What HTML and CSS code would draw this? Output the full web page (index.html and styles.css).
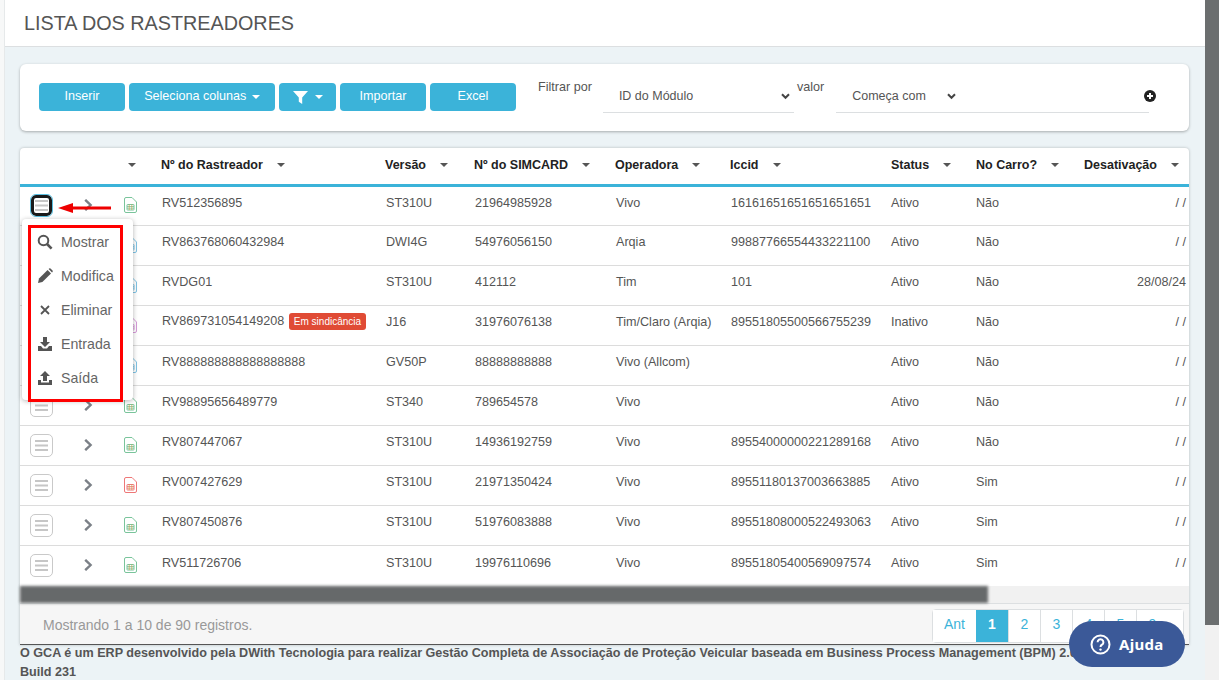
FILE: index.html
```html
<!DOCTYPE html>
<html lang="pt-BR">
<head>
    <meta charset="UTF-8">
    <meta name="viewport" content="width=device-width, initial-scale=1.0">
    <title>Lista dos Rastreadores</title>
    <link rel="stylesheet" href="styles.css">
</head>
<body>
    <svg class="defs" width="0" height="0">
        <symbol id="ico-sim" viewBox="0 0 13 16">
            <path d="M2 .5h6l4.5 4.5v9a1.5 1.5 0 0 1-1.5 1.5H2A1.5 1.5 0 0 1 .5 14V2A1.5 1.5 0 0 1 2 .5z" fill="none" stroke="currentColor" stroke-width="1"/>
            <rect x="3" y="7.5" width="7" height="5.5" rx=".5" fill="none" stroke="currentColor" stroke-width="1"/>
            <path d="M3 9.5h7M3 11.2h7" stroke="currentColor" stroke-width=".8"/>
            <path d="M5.2 7.5V13M7.8 7.5V13" stroke="#c9a24a" stroke-width=".7"/>
        </symbol>
        <symbol id="ico-lines" viewBox="0 0 13 11">
            <path d="M0 1h13M0 5.5h13M0 10h13" stroke="#c6c6c6" stroke-width="2"/>
        </symbol>
        <symbol id="ico-chevron" viewBox="0 0 9 12">
            <path d="M1.2 .8L6.6 6 1.2 11.2" fill="none" stroke="#7b8087" stroke-width="2.4"/>
        </symbol>
    </svg>

    <div class="page">
        <div class="sliver"></div>
        <div class="main">
            <div class="title-bar"><h1>LISTA DOS RASTREADORES</h1></div>

            <div class="filter-card">
                <div class="btn-group">
                    <button class="btn btn-insert">Inserir</button>
                    <button class="btn btn-cols">Seleciona colunas <span class="caret"></span></button>
                    <button class="btn btn-funnel">
                        <svg width="15" height="13" viewBox="0 0 15 13"><path d="M0 0h15L9.2 6.6V13L5.8 10.8V6.6z" fill="#fff"/></svg>
                        <span class="caret"></span>
                    </button>
                    <button class="btn btn-insert">Importar</button>
                    <button class="btn btn-insert">Excel</button>
                </div>
                <span class="filter-label label-por">Filtrar por</span>
                <div class="select-box select-field">
                    <span>ID do Módulo</span>
                    <svg class="select-arrow" width="9" height="7" viewBox="0 0 9 7"><path d="M1 1.2l3.5 3.6L8 1.2" fill="none" stroke="#444" stroke-width="2"/></svg>
                </div>
                <span class="filter-label label-valor">valor</span>
                <div class="select-box select-value">
                    <span>Começa com</span>
                    <svg class="select-arrow-near" width="9" height="7" viewBox="0 0 9 7"><path d="M1 1.2l3.5 3.6L8 1.2" fill="none" stroke="#444" stroke-width="2"/></svg>
                    <svg class="plus" width="12" height="12" viewBox="0 0 12 12"><circle cx="6" cy="6" r="6" fill="#222"/><path d="M6 3v6M3 6h6" stroke="#fff" stroke-width="2"/></svg>
                </div>
            </div>

            <div class="table-card">
                <table class="grid">
                    <colgroup>
                        <col class="c-menu"><col class="c-exp"><col class="c-ico"><col class="c-num">
                        <col class="c-ver"><col class="c-sim"><col class="c-op"><col class="c-iccid">
                        <col class="c-status"><col class="c-car"><col class="c-off">
                    </colgroup>
                    <thead>
                        <tr>
                            <th></th><th></th>
                            <th class="th-ico"><span class="caret dark"></span></th>
                            <th>Nº do Rastreador<span class="caret dark"></span></th>
                            <th>Versão<span class="caret dark"></span></th>
                            <th>Nº do SIMCARD<span class="caret dark"></span></th>
                            <th>Operadora<span class="caret dark"></span></th>
                            <th>Iccid<span class="caret dark"></span></th>
                            <th>Status<span class="caret dark"></span></th>
                            <th>No Carro?<span class="caret dark"></span></th>
                            <th>Desativação<span class="caret dark"></span></th>
                        </tr>
                    </thead>
                    <tbody>
                        <tr>
                            <td><span class="row-btn active"><svg width="13" height="11"><use href="#ico-lines"/></svg></span></td>
                            <td class="td-exp"><svg width="9" height="12"><use href="#ico-chevron"/></svg></td>
                            <td class="td-ico green"><svg width="13" height="16"><use href="#ico-sim"/></svg></td>
                            <td>RV512356895</td><td>ST310U</td><td>21964985928</td><td>Vivo</td><td>16161651651651651651</td><td>Ativo</td><td>Não</td><td class="right">/ /</td>
                        </tr>
                        <tr>
                            <td></td>
                            <td class="td-exp"><svg width="9" height="12"><use href="#ico-chevron"/></svg></td>
                            <td class="td-ico blue"><svg width="13" height="16"><use href="#ico-sim"/></svg></td>
                            <td>RV863768060432984</td><td>DWI4G</td><td>54976056150</td><td>Arqia</td><td>99887766554433221100</td><td>Ativo</td><td>Não</td><td class="right">/ /</td>
                        </tr>
                        <tr>
                            <td></td>
                            <td class="td-exp"><svg width="9" height="12"><use href="#ico-chevron"/></svg></td>
                            <td class="td-ico blue"><svg width="13" height="16"><use href="#ico-sim"/></svg></td>
                            <td>RVDG01</td><td>ST310U</td><td>412112</td><td>Tim</td><td>101</td><td>Ativo</td><td>Não</td><td class="right">28/08/24</td>
                        </tr>
                        <tr>
                            <td></td>
                            <td class="td-exp"><svg width="9" height="12"><use href="#ico-chevron"/></svg></td>
                            <td class="td-ico violet"><svg width="13" height="16"><use href="#ico-sim"/></svg></td>
                            <td>RV869731054149208 <span class="badge">Em sindicância</span></td><td>J16</td><td>31976076138</td><td>Tim/Claro (Arqia)</td><td>89551805500566755239</td><td>Inativo</td><td>Não</td><td class="right">/ /</td>
                        </tr>
                        <tr>
                            <td></td>
                            <td class="td-exp"><svg width="9" height="12"><use href="#ico-chevron"/></svg></td>
                            <td class="td-ico blue"><svg width="13" height="16"><use href="#ico-sim"/></svg></td>
                            <td>RV888888888888888888</td><td>GV50P</td><td>88888888888</td><td>Vivo (Allcom)</td><td></td><td>Ativo</td><td>Não</td><td class="right">/ /</td>
                        </tr>
                        <tr>
                            <td><span class="row-btn"><svg width="13" height="11"><use href="#ico-lines"/></svg></span></td>
                            <td class="td-exp"><svg width="9" height="12"><use href="#ico-chevron"/></svg></td>
                            <td class="td-ico green"><svg width="13" height="16"><use href="#ico-sim"/></svg></td>
                            <td>RV98895656489779</td><td>ST340</td><td>789654578</td><td>Vivo</td><td></td><td>Ativo</td><td>Não</td><td class="right">/ /</td>
                        </tr>
                        <tr>
                            <td><span class="row-btn"><svg width="13" height="11"><use href="#ico-lines"/></svg></span></td>
                            <td class="td-exp"><svg width="9" height="12"><use href="#ico-chevron"/></svg></td>
                            <td class="td-ico green"><svg width="13" height="16"><use href="#ico-sim"/></svg></td>
                            <td>RV807447067</td><td>ST310U</td><td>14936192759</td><td>Vivo</td><td>89554000000221289168</td><td>Ativo</td><td>Não</td><td class="right">/ /</td>
                        </tr>
                        <tr>
                            <td><span class="row-btn"><svg width="13" height="11"><use href="#ico-lines"/></svg></span></td>
                            <td class="td-exp"><svg width="9" height="12"><use href="#ico-chevron"/></svg></td>
                            <td class="td-ico red"><svg width="13" height="16"><use href="#ico-sim"/></svg></td>
                            <td>RV007427629</td><td>ST310U</td><td>21971350424</td><td>Vivo</td><td>89551180137003663885</td><td>Ativo</td><td>Sim</td><td class="right">/ /</td>
                        </tr>
                        <tr>
                            <td><span class="row-btn"><svg width="13" height="11"><use href="#ico-lines"/></svg></span></td>
                            <td class="td-exp"><svg width="9" height="12"><use href="#ico-chevron"/></svg></td>
                            <td class="td-ico green"><svg width="13" height="16"><use href="#ico-sim"/></svg></td>
                            <td>RV807450876</td><td>ST310U</td><td>51976083888</td><td>Vivo</td><td>89551808000522493063</td><td>Ativo</td><td>Sim</td><td class="right">/ /</td>
                        </tr>
                        <tr>
                            <td><span class="row-btn"><svg width="13" height="11"><use href="#ico-lines"/></svg></span></td>
                            <td class="td-exp"><svg width="9" height="12"><use href="#ico-chevron"/></svg></td>
                            <td class="td-ico green"><svg width="13" height="16"><use href="#ico-sim"/></svg></td>
                            <td>RV511726706</td><td>ST310U</td><td>19976110696</td><td>Vivo</td><td>89551805400569097574</td><td>Ativo</td><td>Sim</td><td class="right">/ /</td>
                        </tr>
                    </tbody>
                </table>

                <div class="h-scroll"><div class="h-thumb"></div></div>

                <div class="table-foot">
                    <span class="foot-info">Mostrando 1 a 10 de 90 registros.</span>
                    <div class="pager">
                        <a>Ant</a><a class="current">1</a><a>2</a><a>3</a><a>4</a><a>5</a><a>9</a>
                    </div>
                </div>

                <!-- row menu open over the table -->
                <div class="row-menu">
                    <div class="menu-item">
                        <svg width="16" height="16" viewBox="0 0 16 16"><circle cx="6.5" cy="6.5" r="4.8" fill="none" stroke="#555" stroke-width="2"/><path d="M10 10l4.6 4.6" stroke="#555" stroke-width="2.6"/></svg>
                        Mostrar
                    </div>
                    <div class="menu-item">
                        <svg width="16" height="16" viewBox="0 0 16 16"><path d="M1 15l1-4.4L10.6 2l3.4 3.4L5.4 14z" fill="#555"/><path d="M11.6 1l.6-.4a1 1 0 0 1 1.3 0l2 2a1 1 0 0 1 0 1.3l-.5.6z" fill="#555"/></svg>
                        Modifica
                    </div>
                    <div class="menu-item">
                        <svg width="16" height="16" viewBox="0 0 16 16"><path d="M4 4l8 8M12 4l-8 8" stroke="#555" stroke-width="1.8"/></svg>
                        Eliminar
                    </div>
                    <div class="menu-item">
                        <svg width="16" height="16" viewBox="0 0 16 16"><path d="M6 1h4v5h3L8 11 3 6h3z" fill="#555"/><path d="M1 10h3l2 2.5h4l2-2.5h3v5H1z" fill="#555"/></svg>
                        Entrada
                    </div>
                    <div class="menu-item">
                        <svg width="16" height="16" viewBox="0 0 16 16"><path d="M8 1l5 5h-3v5H6V6H3z" fill="#555"/><path d="M1 10h3v2.5h8V10h3v5H1z" fill="#555"/></svg>
                        Saída
                    </div>
                    <div class="menu-mark"></div>
                </div>

                <svg class="red-arrow" width="53" height="10" viewBox="0 0 53 10"><path d="M0 5l15-5v3.5h38v3H15V10z" fill="#ee0000"/></svg>
            </div>

            <p class="about">O GCA é um ERP desenvolvido pela DWith Tecnologia para realizar Gestão Completa de Associação de Proteção Veicular baseada em Business Process Management (BPM) 2.0<br>Build 231</p>
        </div>
        <div class="page-scroll"><div class="page-thumb"></div></div>
    </div>

    <button class="help">
        <svg width="21" height="21" viewBox="0 0 21 21"><circle cx="10.5" cy="10.5" r="9" fill="none" stroke="#fff" stroke-width="2"/><path d="M7.6 8.2a2.9 2.9 0 1 1 4.4 2.5c-1 .6-1.5 1-1.5 2.2" fill="none" stroke="#fff" stroke-width="2"/><circle cx="10.5" cy="15.6" r="1.2" fill="#fff"/></svg>
        Ajuda
    </button>
</body>
</html>
```

FILE: styles.css
```css
* {
    box-sizing: border-box;
}

html, body {
    margin: 0;
    height: 680px;
    overflow: hidden;
}

body {
    font-family: "Liberation Sans", Arial, sans-serif;
    font-size: 14px;
    color: #555;
    background: #ecf3f6;
}

.defs {
    position: absolute;
}

.page {
    display: flex;
    height: 680px;
}

.sliver {
    width: 5px;
    background: #f7f8f8;
    border-right: 1px solid #e6e9ea;
}

.main {
    width: 1200px;
}

.page-scroll {
    width: 14px;
    background: #f1f1f1;
}

.page-thumb {
    height: 625px;
    background: #6b6e6f;
}

/* title */
.title-bar {
    height: 47px;
    padding-left: 19px;
    background: #fff;
    border-bottom: 1px solid #dcdfe1;
}

.title-bar h1 {
    margin: 0;
    font-size: 19.8px;
    font-weight: 400;
    line-height: 46px;
    color: #555;
}

/* filter */
.filter-card {
    display: flex;
    align-items: flex-start;
    height: 67px;
    margin: 17px 16px 17px 15px;
    padding-top: 19px;
    padding-left: 19px;
    background: #fff;
    border-radius: 6px;
    box-shadow: 0 1px 3px rgba(0, 0, 0, .3);
}

.btn-group {
    display: flex;
    gap: 4px;
}

.btn {
    height: 28px;
    padding: 0;
    border: 0;
    border-radius: 4px;
    font-family: inherit;
    font-size: 12.6px;
    color: #fff;
    background: #3bb3d9;
}

.btn-insert {
    width: 86px;
    padding-bottom: 2px;
}

.btn-cols {
    width: 146px;
    padding-bottom: 2px;
}

.btn-funnel {
    display: flex;
    align-items: center;
    justify-content: center;
    gap: 5px;
    width: 57px;
}

.caret {
    display: inline-block;
    width: 0;
    height: 0;
    margin-left: 2px;
    vertical-align: middle;
    border-top: 4px solid #fff;
    border-left: 4px solid transparent;
    border-right: 4px solid transparent;
}

.caret.dark {
    margin-left: 14px;
    border-top-color: #555;
}

.filter-label {
    font-size: 12.6px;
    color: #555;
}

.label-por {
    margin: -3px 0 0 22px;
}

.label-valor {
    margin: -3px 0 0 3px;
}

.select-box {
    display: flex;
    align-items: center;
    height: 30px;
    padding-bottom: 3px;
    font-size: 12.5px;
    border-bottom: 1px solid #dcdfe1;
}

.select-field {
    justify-content: space-between;
    width: 191px;
    margin-left: 11px;
    padding-left: 16px;
    padding-right: 4px;
}

.select-value {
    width: 313px;
    margin-left: 12px;
    padding-left: 16px;
}

.select-arrow-near {
    margin-left: 21px;
}

.plus {
    margin-left: auto;
    margin-right: -7px;
}

/* table */
.table-card {
    position: relative;
    width: 1169px;
    margin-left: 15px;
    background: #fff;
    box-shadow: 0 0 3px rgba(0, 0, 0, .25);
    border-radius: 4px 4px 0 0;
}

.grid {
    width: 1169px;
    border-collapse: collapse;
    table-layout: fixed;
    font-size: 12.6px;
}

.c-menu { width: 56px; }
.c-exp { width: 38px; }
.c-ico { width: 47px; }
.c-num { width: 224px; }
.c-ver { width: 89px; }
.c-sim { width: 141px; }
.c-op { width: 115px; }
.c-iccid { width: 161px; }
.c-status { width: 85px; }
.c-car { width: 108px; }
.c-off { width: 105px; }

.grid th {
    height: 37px;
    padding: 0 0 2px;
    font-size: 12.5px;
    font-weight: 700;
    color: #222;
    text-align: left;
    white-space: nowrap;
    border-bottom: 3px solid #3bb3d9;
}

.grid td {
    height: 40px;
    padding: 0 0 7px 1px;
    white-space: nowrap;
    border-bottom: 1px solid #dcdcdc;
}

.grid tr:last-child td {
    height: 41px;
    border-bottom: 0;
}

.grid tr:first-child td:nth-child(n+4),
.grid tr:last-child td:nth-child(n+4) {
    padding-bottom: 5px;
}

.grid td:nth-child(9),
.grid td:nth-child(10) {
    padding-left: 0;
}

.grid td:first-child {
    padding: 0 0 0 10px;
}

.grid .td-exp {
    padding: 2px 0 0 8px;
}

.grid .td-ico {
    padding: 2px 0 0 10px;
}

.grid td.right {
    padding-right: 3px;
    text-align: right;
}

.green { color: #79c49b; }
.blue { color: #7fc3e4; }
.violet { color: #d69ad9; }
.red { color: #ee7777; }

.row-btn {
    display: flex;
    align-items: center;
    justify-content: center;
    width: 23px;
    height: 23px;
    border: 1px solid #c9c9c9;
    border-radius: 5px;
}

.row-btn.active {
    width: 21px;
    height: 21px;
    margin: 1px;
    border: 3px solid #1a1a1a;
    outline: 1px solid #5bbfe0;
}

.badge {
    display: inline-block;
    height: 17px;
    margin-left: 1px;
    padding: 0 5px;
    font-size: 10px;
    line-height: 17px;
    color: #fff;
    vertical-align: 0;
    background: #e04b35;
    border-radius: 3px;
}

.h-scroll {
    height: 17px;
    background: #f1f1f1;
}

.h-thumb {
    width: 968px;
    height: 17px;
    background: #66696a;
    filter: blur(1.5px);
}

.table-foot {
    display: flex;
    align-items: center;
    justify-content: space-between;
    height: 42px;
    padding: 0 5px 0 23px;
    background: #f6f6f6;
    border-top: 1px solid #dcdfe1;
    border-bottom: 1px solid #555;
}

.foot-info {
    margin-top: 1px;
    color: #999;
}

.pager {
    display: flex;
    margin-top: 3px;
    border: 1px solid #dcdfe1;
    border-radius: 4px;
}

.pager a {
    width: 32px;
    height: 32px;
    font-size: 14px;
    line-height: 29px;
    text-align: center;
    color: #3bb3d9;
    background: #fff;
    border-left: 1px solid #dcdfe1;
}

.pager a:first-child {
    width: 43px;
    border-left: 0;
}

.pager a:last-child {
    width: 47px;
    padding-right: 15px;
}

.pager .current {
    font-weight: 700;
    color: #fff;
    background: #3bb3d9;
    border-left: 0;
}

/* open row menu */
.row-menu {
    position: absolute;
    top: 71px;
    left: 2px;
    width: 111px;
    height: 181px;
    padding-top: 6px;
    background: #fff;
    border-radius: 4px;
    box-shadow: 0 1px 5px rgba(0, 0, 0, .3);
}

.menu-item {
    display: flex;
    align-items: center;
    gap: 8px;
    height: 34px;
    padding-left: 15px;
    font-size: 14.2px;
    color: #666;
}

.menu-mark {
    position: absolute;
    top: 6px;
    left: 6px;
    width: 95px;
    height: 177px;
    border: 3px solid #f00;
}

.red-arrow {
    position: absolute;
    top: 55px;
    left: 38px;
}

.about {
    margin: -1px 0 0;
    padding-left: 15px;
    font-size: 12.6px;
    font-weight: 700;
    line-height: 18.5px;
    color: #555;
}

.help {
    position: fixed;
    top: 621px;
    left: 1069px;
    display: flex;
    align-items: center;
    gap: 8px;
    height: 46px;
    width: 116px;
    padding-left: 21px;
    border: 0;
    border-radius: 23px;
    font-family: "Noto Sans", sans-serif;
    font-size: 15px;
    font-weight: 700;
    letter-spacing: .3px;
    color: #fff;
    background: #3b5998;
}
```
